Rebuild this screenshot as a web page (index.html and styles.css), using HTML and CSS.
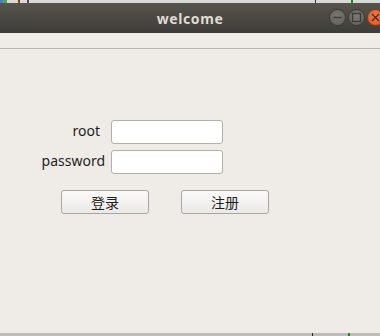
FILE: index.html
```html
<!DOCTYPE html>
<html>
<head>
<meta charset="utf-8">
<link rel="stylesheet" href="styles.css">
</head>
<body>
<div class="desk-top">
  <span class="dt-icon dt-blue"></span><span class="dt-icon dt-green"></span>
  <span class="dt-bit dt-red"></span><span class="dt-bit dt-dark"></span>
  <span class="dt-edge"></span><span class="dt-greenline"></span>
</div>
<div class="window">
  <div class="titlebar">
    <span class="title">welcome</span>
    <div class="controls">
      <span class="ctl ctl-min"><svg width="17" height="17" viewBox="0 0 17 17"><line x1="4.5" y1="8.5" x2="12.5" y2="8.5" stroke="#3a3935" stroke-width="1.4"/></svg></span>
      <span class="ctl ctl-max"><svg width="17" height="17" viewBox="0 0 17 17"><rect x="4.5" y="4.5" width="8" height="8" fill="none" stroke="#3a3935" stroke-width="1.2"/></svg></span>
      <span class="ctl ctl-close"><svg width="17" height="17" viewBox="0 0 17 17"><path d="M5 5 L12 12 M12 5 L5 12" stroke="#4a2a1a" stroke-width="1.4"/></svg></span>
    </div>
  </div>
  <div class="menubar"></div>
  <div class="content">
    <div class="form">
      <label class="lbl lbl-root">root</label>
      <input class="field" type="text">
      <label class="lbl">password</label>
      <input class="field" type="password">
    </div>
    <div class="buttons">
      <button class="btn">登录</button>
      <button class="btn">注册</button>
    </div>
  </div>
</div>
<div class="desk-bottom">
  <span class="db-line"></span><span class="db-green"></span>
</div>
</body>
</html>
```

FILE: styles.css
```css
html, body {
  margin: 0;
  padding: 0;
}
body {
  width: 380px;
  height: 336px;
  overflow: hidden;
  background: #bdbcba;
  font-family: "Noto Sans", "Noto Sans CJK SC", sans-serif;
  display: flex;
  flex-direction: column;
}
.desk-top {
  height: 3px;
  background: #d9d9d6;
  display: flex;
  position: relative;
}
.dt-icon { width: 3px; height: 3px; }
.dt-blue { background: #4b7fb8; }
.dt-green { background: #5aa05a; width: 4px; }
.dt-bit { width: 2px; height: 3px; }
.dt-red { background: #8a3a22; margin-left: 11px; }
.dt-dark { background: #4d4a60; margin-left: 7px; }
.dt-edge { width: 1px; background: #333; margin-left: 286px; }
.dt-greenline { width: 2px; background: #1d8a1d; margin-left: 35px; }

.window {
  height: 330px;
  background: #efece8;
  display: flex;
  flex-direction: column;
}
.titlebar {
  height: 30px;
  background: linear-gradient(#57544d, #3d3c38);
  position: relative;
  display: flex;
  align-items: center;
  justify-content: center;
}
.title {
  color: #dfdbd2;
  font-family: "Noto Sans", sans-serif;
  font-weight: bold;
  font-size: 14px;
  letter-spacing: 0.6px;
}
.controls {
  position: absolute;
  left: 329px;
  top: 6px;
  display: flex;
  gap: 2px;
}
.ctl {
  width: 17px;
  height: 17px;
  border-radius: 50%;
  display: flex;
  box-sizing: border-box;
}
.ctl-min, .ctl-max {
  background: radial-gradient(circle at 50% 40%, #7b7872, #5f5d58);
  border: 1px solid #3a3935;
}
.ctl-min svg, .ctl-max svg { margin: -1px; }
.ctl-close {
  background: radial-gradient(circle at 50% 40%, #f37a4a, #e0531f);
  border: 1px solid #8c3a17;
}
.ctl-close svg { margin: -1px; }

.menubar {
  height: 15px;
  border-bottom: 1px solid #b9b6b1;
}
.content {
  flex: 1;
  padding-top: 71px;
}
.form {
  display: grid;
  grid-template-columns: 105px 112px;
  column-gap: 6px;
  row-gap: 6px;
}
.lbl {
  font-size: 14px;
  color: #1e1e1e;
  text-align: right;
  align-self: center;
  line-height: 19px;
  padding-bottom: 4px;
}
.lbl-root { padding-right: 5px; }
.field {
  box-sizing: border-box;
  width: 112px;
  height: 24px;
  margin: 0;
  padding: 0 4px;
  background: #ffffff;
  border: 1px solid #b3b0ab;
  border-radius: 3px;
  outline: none;
}
.buttons {
  display: flex;
  gap: 32px;
  padding-left: 61px;
  margin-top: 16px;
}
.btn {
  box-sizing: border-box;
  width: 88px;
  height: 24px;
  margin: 0;
  padding: 0;
  border: 1px solid #a9a6a1;
  border-radius: 3px;
  background: linear-gradient(#fbfaf9, #ebe9e6);
  font-family: "Noto Sans CJK SC", sans-serif;
  font-size: 14px;
  color: #1e1e1e;
  line-height: 20px;
}
.desk-bottom {
  flex: 1;
  background: #bdbcba;
  display: flex;
}
.db-line { width: 1px; background: #222; margin-left: 312px; }
.db-green { width: 2px; background: #1d8a1d; margin-left: 35px; }
```
